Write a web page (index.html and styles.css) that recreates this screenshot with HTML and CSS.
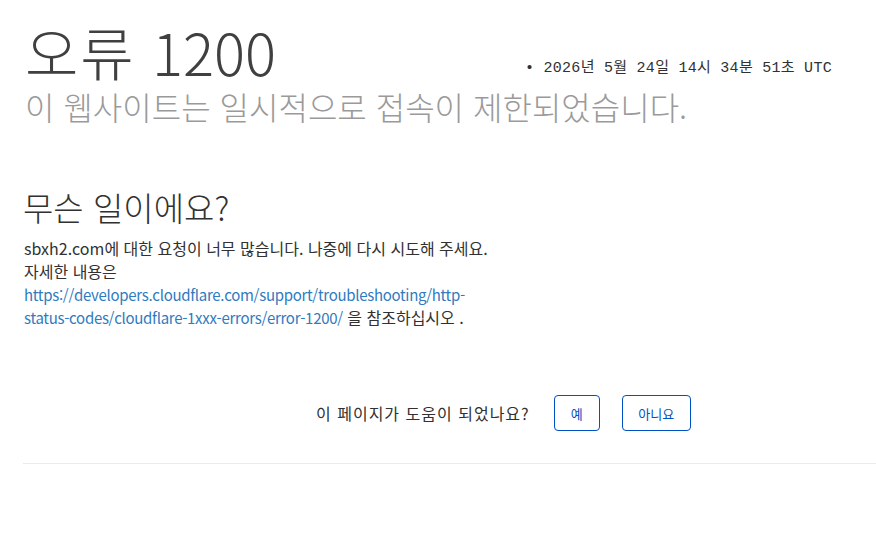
FILE: index.html
```html
<!DOCTYPE html>
<html lang="ko">
<head>
<meta charset="utf-8">
<title>오류 1200</title>
<link rel="stylesheet" href="styles.css">
</head>
<body>
<div class="wrapper">
  <header class="header">
    <div class="title-row">
      <h1 class="title"><span class="title-word">오류</span> <span>1200</span></h1>
      <span class="time">• 2026년 5월 24일 14시 34분 51초 UTC</span>
    </div>
    <h2 class="subtitle">이 웹사이트는 일시적으로 접속이 제한되었습니다.</h2>
  </header>
  <section class="details">
    <h2 class="what">무슨 일이에요?</h2>
    <p class="text">sbxh2.com에 대한 요청이 너무 많습니다. 나중에 다시 시도해 주세요.<br>자세한 내용은 <a href="#" class="link">https://developers.cloudflare.com/support/troubleshooting/http-status-codes/cloudflare-1xxx-errors/error-1200/</a> 을 참조하십시오 .</p>
  </section>
  <div class="feedback">
    <span class="question">이 페이지가 도움이 되었나요?</span>
    <button class="btn btn-yes">예</button>
    <button class="btn btn-no">아니요</button>
  </div>
  <div class="rule"></div>
</div>
</body>
</html>
```
FILE: styles.css
```css
html, body {
  margin: 0;
  padding: 0;
  background: #fff;
}
body {
  font-family: "Noto Sans CJK KR", "Noto Sans", sans-serif;
  color: #404040;
}
.wrapper {
  padding: 0 0 0 23px;
}
.header {
  padding-top: 15px;
}
.title-row {
  display: flex;
  align-items: baseline;
}
.title {
  margin: 0 0 0 2px;
  font-size: 58px;
  font-weight: 300;
  line-height: 72px;
  color: #404040;
  width: 500px;
}
.title-word {
  letter-spacing: 2px;
}
.time {
  font-family: "Liberation Mono", "Noto Sans CJK KR", monospace;
  font-size: 15px;
  letter-spacing: 0.27px;
  color: #313131;
  position: relative;
  top: -4px;
}
.subtitle {
  margin: 0 0 0 2px;
  font-size: 32px;
  font-weight: 300;
  line-height: 38px;
  color: #9a9a9a;
}
.details {
  margin-top: 62px;
  width: 472px;
}
.what {
  margin: 0;
  font-size: 33px;
  font-weight: 300;
  line-height: 40px;
  color: #313131;
}
.text {
  margin: 10px 0 0 1px;
  font-size: 16px;
  line-height: 23px;
  color: #313131;
}
.link {
  color: #2f7bbf;
  text-decoration: none;
  font-size: 15px;
  letter-spacing: -0.3px;
}
.feedback {
  display: flex;
  align-items: center;
  margin-top: 66px;
  padding-left: 293px;
  height: 36px;
}
.question {
  font-size: 16px;
  letter-spacing: 1px;
  color: #313131;
  margin-right: 24px;
}
.btn {
  font-family: "Noto Sans CJK KR", sans-serif;
  font-size: 13px;
  color: #0051c3;
  background: #fff;
  border: 1px solid #0051c3;
  border-radius: 4px;
  height: 36px;
  padding: 0;
  cursor: pointer;
}
.btn-yes {
  width: 46px;
  margin-right: 22px;
}
.btn-no {
  width: 69px;
}
.rule {
  margin-top: 32px;
  border-top: 1px solid #ebebeb;
}
```
